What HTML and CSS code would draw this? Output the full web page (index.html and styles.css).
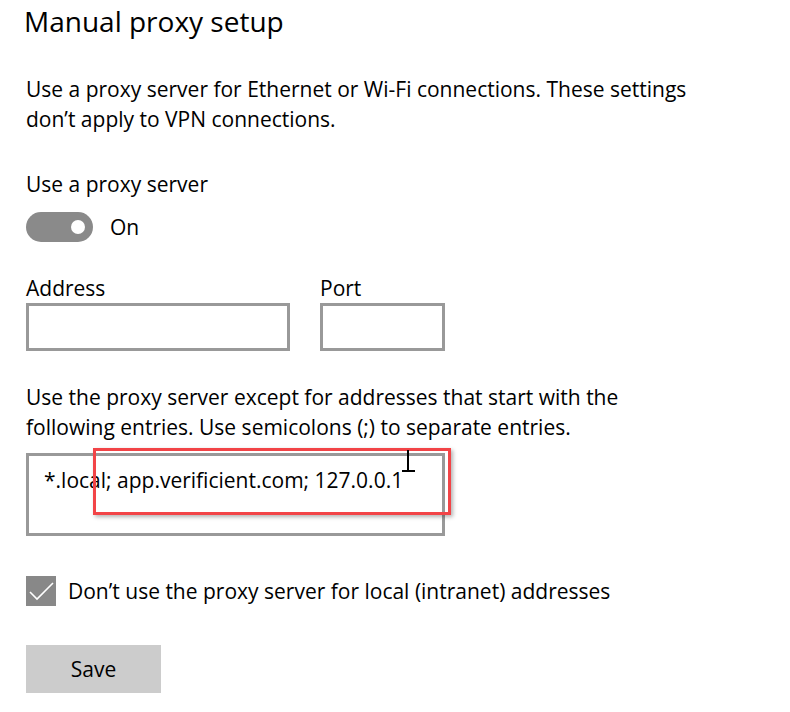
FILE: index.html
```html
<!DOCTYPE html>
<html lang="en">
<head>
    <meta charset="UTF-8">
    <meta name="viewport" content="width=device-width, initial-scale=1.0">
    <title>Manual proxy setup</title>
    <link rel="stylesheet" href="styles.css">
</head>
<body>
    <div class="page">
        <h1>Manual proxy setup</h1>

        <p class="desc">Use a proxy server for Ethernet or Wi-Fi connections. These settings don&rsquo;t apply to VPN connections.</p>

        <p class="label">Use a proxy server</p>
        <div class="toggle-row">
            <span class="toggle"><span class="knob"></span></span>
            <span>On</span>
        </div>

        <div class="fields">
            <div class="field-group">
                <span class="label tight">Address</span>
                <div class="field address"></div>
            </div>
            <div class="field-group">
                <span class="label tight">Port</span>
                <div class="field port"></div>
            </div>
        </div>

        <p class="desc second">Use the proxy server except for addresses that start with the following entries. Use semicolons (;) to separate entries.</p>

        <div class="exceptions">
            <div class="field multiline">*.local; app.verificient.com; 127.0.0.1</div>
            <div class="highlight"></div>
            <svg class="cursor" width="16" height="24" viewBox="0 0 16 24">
                <path d="M7 0 V21 M1 21 H14" stroke="#000" stroke-width="2" fill="none"/>
            </svg>
        </div>

        <div class="check-row">
            <span class="checkbox">
                <svg width="30" height="30" viewBox="0 0 30 30">
                    <path d="M4 16 L11 23 L27 7" stroke="#fff" stroke-width="1.6" fill="none"/>
                </svg>
            </span>
            <span>Don&rsquo;t use the proxy server for local (intranet) addresses</span>
        </div>

        <button class="save">Save</button>
    </div>
</body>
</html>
```

FILE: styles.css
```css
body {
    margin: 0;
    background: #fff;
    color: #000;
    font-family: "Open Sans", "Noto Sans", sans-serif;
    font-size: 21px;
}
.page {
    padding: 1px 0 0 26px;
}
h1 {
    margin: 0 0 0 -2px;
    font-size: 28px;
    font-weight: 400;
    line-height: 40px;
}
p {
    margin: 0;
}
.desc {
    margin-top: 33px;
    line-height: 30px;
    width: 700px;
}
.desc.second {
    margin-top: 31px;
    width: 630px;
}
.label {
    display: block;
    margin-top: 35px;
    line-height: 30px;
}
.label.tight {
    margin-top: 0;
    line-height: 29px;
}
.toggle-row {
    display: flex;
    align-items: center;
    gap: 17px;
    margin-top: 13px;
    height: 30px;
}
.toggle {
    position: relative;
    display: block;
    width: 67px;
    height: 30px;
    border-radius: 15px;
    background: #8a8a8a;
}
.knob {
    position: absolute;
    left: 45px;
    top: 8px;
    width: 14px;
    height: 14px;
    border-radius: 50%;
    background: #fff;
}
.fields {
    display: flex;
    gap: 30px;
    margin-top: 32px;
}
.field-group {
    display: flex;
    flex-direction: column;
}
.field {
    box-sizing: border-box;
    height: 48px;
    border: 3px solid #999;
    background: #fff;
}
.field.address {
    width: 264px;
}
.field.port {
    width: 125px;
}
.exceptions {
    position: relative;
    margin-top: 11px;
    width: 419px;
}
.field.multiline {
    height: 83px;
    padding: 9px 0 0 15px;
    line-height: 30px;
}
.highlight {
    position: absolute;
    left: 67px;
    top: -5px;
    width: 358px;
    height: 67px;
    box-sizing: border-box;
    border: 3px solid #f24447;
    box-shadow: 2px 2px 4px rgba(0, 0, 0, 0.3);
}
.cursor {
    position: absolute;
    left: 375px;
    top: -3px;
}
.check-row {
    display: flex;
    align-items: center;
    gap: 12px;
    margin-top: 40px;
}
.checkbox {
    display: block;
    width: 30px;
    height: 30px;
    background: #888;
}
.checkbox svg {
    display: block;
}
.save {
    display: block;
    margin-top: 39px;
    width: 135px;
    height: 48px;
    border: none;
    background: #ccc;
    color: #000;
    font-family: inherit;
    font-size: 21px;
    padding: 0;
}
```
